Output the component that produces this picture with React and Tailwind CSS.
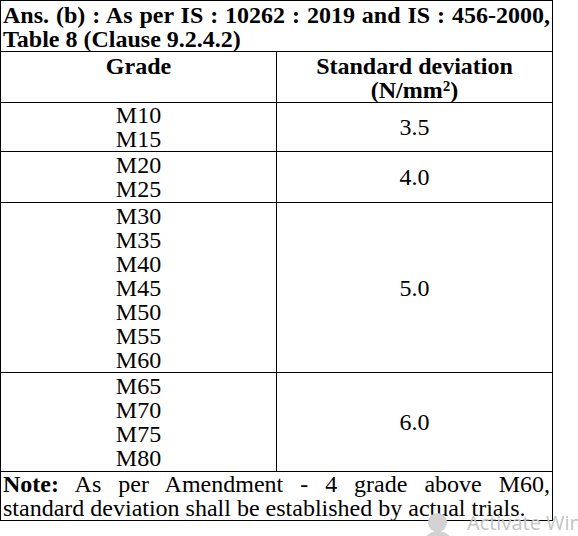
export default function App() {
  const groups = [
    { grades: ["M10", "M15"], sd: "3.5", pad: "" },
    { grades: ["M20", "M25"], sd: "4.0", pad: "pt-[1px] pb-[1px]" },
    { grades: ["M30", "M35", "M40", "M45", "M50", "M55", "M60"], sd: "5.0", pad: "pt-[1px]" },
    { grades: ["M65", "M70", "M75", "M80"], sd: "6.0", pad: "pt-[1px] pb-[1px]" },
  ];
  return (
    <div className="relative w-[578px] h-[536px] bg-white overflow-hidden text-black" style={{ fontFamily: '"Liberation Serif", "Times New Roman", serif' }}>
      <table className="w-[553px] border-collapse border border-black text-[24px] leading-[24px]">
        <tbody>
          <tr>
            <td colSpan={2} className="border border-black px-[2px] pt-[2px] font-bold">
              <div className="text-justify [text-align-last:justify]">Ans. (b) : As per IS : 10262 : 2019 and IS : 456-2000,</div>
              <div>Table 8 (Clause 9.2.4.2)</div>
            </td>
          </tr>
          <tr>
            <td className="w-[276px] border border-black text-center font-bold align-top pt-[2px]">Grade</td>
            <td className="border border-black text-center font-bold align-top pt-[2px]">
              Standard deviation<br />(N/mm<sup className="text-[15px] leading-none">2</sup>)
            </td>
          </tr>
          {groups.map((g) => (
            <tr key={g.sd}>
              <td className={"border border-black text-center " + g.pad}>
                {g.grades.map((x) => (
                  <div key={x}>{x}</div>
                ))}
              </td>
              <td className="border border-black text-center align-middle">{g.sd}</td>
            </tr>
          ))}
          <tr>
            <td colSpan={2} className="border border-black px-[2px]">
              <div className="text-justify [text-align-last:justify]"><b>Note:</b> As per Amendment - 4 grade above M60,</div>
              <div>standard deviation shall be established by actual trials.</div>
            </td>
          </tr>
        </tbody>
      </table>
      <div className="absolute left-[428px] top-[513px] w-[19px] h-[19px] rounded-full bg-[#d2d2d2]"></div>
      <div className="absolute left-[422px] top-[531px] w-[32px] h-[16px] rounded-t-full bg-[#d2d2d2]"></div>
      <div className="absolute left-[467px] top-[510px] whitespace-nowrap text-[20px] leading-[26px] text-[#c4c4c4]" style={{ fontFamily: '"Open Sans", "Noto Sans", sans-serif' }}>
        Activate Windows
      </div>
    </div>
  );
}
